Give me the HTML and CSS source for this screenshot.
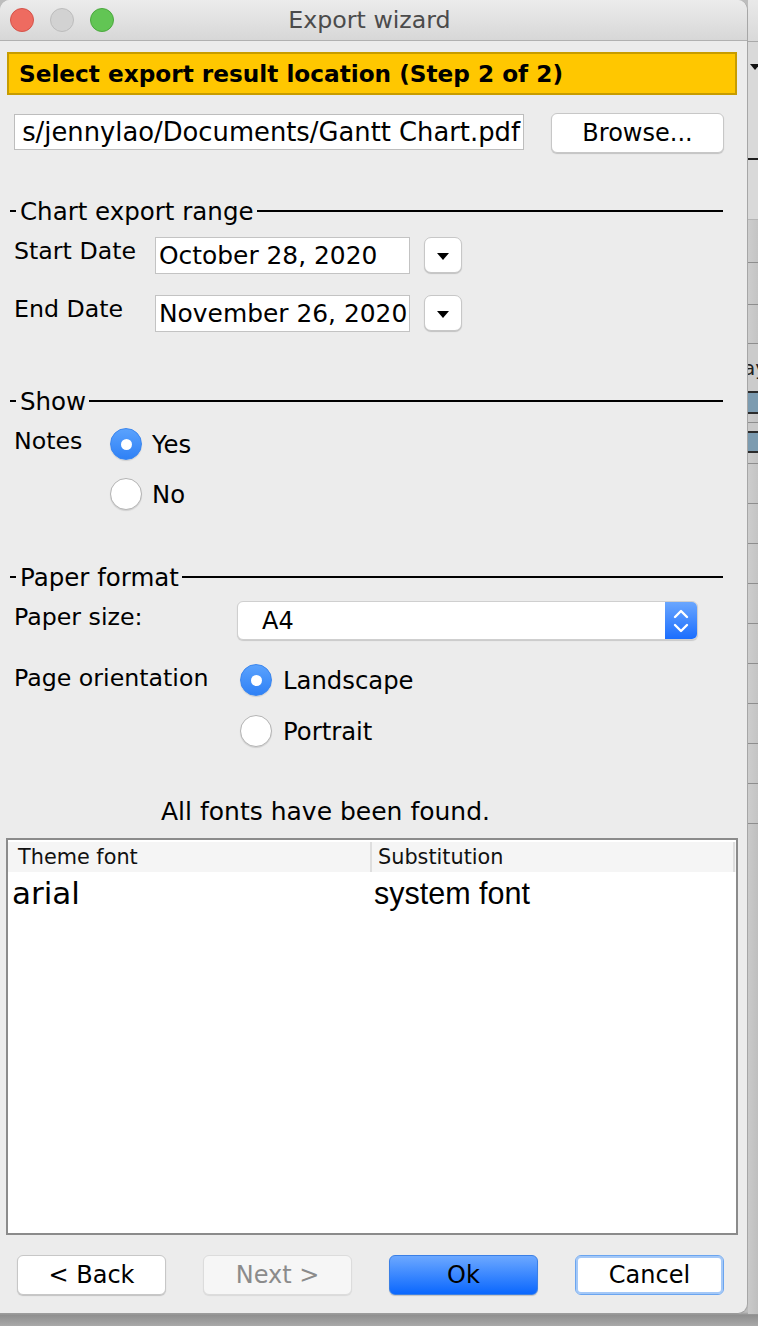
FILE: index.html
```html
<!DOCTYPE html>
<html>
<head>
<meta charset="utf-8">
<title>Export wizard</title>
<link rel="stylesheet" href="styles.css">
</head>
<body>
<div class="screen">
  <div class="dialog">
    <div class="titlebar">
      <div class="lights">
        <span class="light red"></span>
        <span class="light gray"></span>
        <span class="light green"></span>
      </div>
      <div class="title">Export wizard</div>
      <div></div>
    </div>
    <div class="content">
      <div class="banner">Select export result location (Step 2 of 2)</div>

      <div class="path-row">
        <div class="path-field"><span>s/jennylao/Documents/Gantt Chart.pdf</span></div>
        <button class="btn browse">Browse...</button>
      </div>

      <div class="group-title first"><span class="dash"></span><span class="gt">Chart export range</span><span class="rule"></span></div>
      <div class="form-row date-first">
        <span class="lbl date-lbl">Start Date</span>
        <div class="date-field">October 28, 2020</div>
        <button class="btn drop"><svg width="12" height="7" viewBox="0 0 12 7"><path d="M0 0H12L6 7Z" fill="#000"/></svg></button>
      </div>
      <div class="form-row date-second">
        <span class="lbl date-lbl">End Date</span>
        <div class="date-field">November 26, 2020</div>
        <button class="btn drop"><svg width="12" height="7" viewBox="0 0 12 7"><path d="M0 0H12L6 7Z" fill="#000"/></svg></button>
      </div>

      <div class="group-title show"><span class="dash"></span><span class="gt">Show</span><span class="rule"></span></div>
      <div class="form-row notes-row">
        <span class="lbl notes-lbl">Notes</span>
        <div class="options">
          <div class="option"><span class="radio on"></span><span class="opt-text">Yes</span></div>
          <div class="option second"><span class="radio"></span><span class="opt-text">No</span></div>
        </div>
      </div>

      <div class="group-title paper"><span class="dash"></span><span class="gt">Paper format</span><span class="rule"></span></div>
      <div class="form-row size-row">
        <span class="lbl size-lbl">Paper size:</span>
        <div class="select">
          <span class="sel-value">A4</span>
          <span class="sel-arrows"><svg width="32" height="37" viewBox="0 0 32 37"><path d="M10 15L16 9L22 15M10 23L16 29L22 23" fill="none" stroke="#fff" stroke-width="2.4" stroke-linecap="round" stroke-linejoin="round"/></svg></span>
        </div>
      </div>
      <div class="form-row orient-row">
        <span class="lbl orient-lbl">Page orientation</span>
        <div class="options">
          <div class="option"><span class="radio on"></span><span class="opt-text">Landscape</span></div>
          <div class="option second"><span class="radio"></span><span class="opt-text">Portrait</span></div>
        </div>
      </div>

      <div class="fonts-msg">All fonts have been found.</div>

      <div class="table">
        <div class="thead">
          <div class="th th1">Theme font</div>
          <div class="th th2">Substitution</div>
        </div>
        <div class="trow">
          <div class="td td1">arial</div>
          <div class="td td2">system font</div>
        </div>
      </div>

      <div class="actions">
        <button class="btn act">&lt; Back</button>
        <button class="btn act disabled">Next &gt;</button>
        <button class="btn act primary">Ok</button>
        <button class="btn act focus">Cancel</button>
      </div>
    </div>
  </div>

  <div class="backapp">
    <div class="ba-title"></div>
    <div class="ba-toolbar">
      <svg class="ba-tri" width="10" height="6" viewBox="0 0 10 6"><path d="M0 0H10L5 6Z" fill="#111"/></svg>
      <div class="ba-dark"></div>
    </div>
    <div class="ba-row h43"></div>
    <div class="ba-row h42"></div>
    <div class="ba-row h39"></div>
    <div class="ba-text"><span>ay</span></div>
    <div class="ba-blue"></div>
    <div class="ba-row h9"></div>
    <div class="ba-blue b2"></div>
    <div class="ba-row h11"></div>
    <div class="ba-row h40"></div>
    <div class="ba-row h40"></div>
    <div class="ba-row h40"></div>
    <div class="ba-row h40"></div>
    <div class="ba-row h40"></div>
    <div class="ba-row h40"></div>
    <div class="ba-row h40"></div>
    <div class="ba-row h40"></div>
    <div class="ba-row h40"></div>
    <div class="ba-rest"></div>
  </div>
</div>
</body>
</html>
```

FILE: styles.css
```css
* { box-sizing: border-box; }
html, body { margin: 0; padding: 0; }
body { width: 758px; height: 1326px; overflow: hidden; background: #a4a4a4; }

.screen {
  display: flex;
  align-items: flex-start;
  width: 758px;
  height: 1326px;
  background: linear-gradient(180deg, #bdbdbd 0, #bdbdbd 1312px, #8f8f8f 1315px, #a9a9a9 1326px);
}

.dialog {
  flex: none;
  width: 748px;
  height: 1314px;
  background: #ececec;
  border-right: 1px solid #a6a6a6;
  border-bottom: 1px solid #9c9c9c;
  border-radius: 10px 10px 10px 0;
  overflow: hidden;
  display: flex;
  flex-direction: column;
  font-family: "DejaVu Sans", "Noto Sans", sans-serif;
  color: #000;
}

/* title bar */
.titlebar {
  flex: none;
  height: 41px;
  background: linear-gradient(180deg, #ececec 0%, #d7d7d7 100%);
  border-bottom: 1px solid #b1b1b1;
  display: grid;
  grid-template-columns: 1fr auto 1fr;
  align-items: center;
}
.lights { display: flex; align-items: center; gap: 16px; padding-left: 10px; }
.light { width: 24px; height: 24px; border-radius: 50%; display: block; }
.light.red { background: #ee6b60; border: 1px solid #d4534a; }
.light.gray { background: #d2d2d2; border: 1px solid #bcbcbc; }
.light.green { background: #62c554; border: 1px solid #4ba83e; }
.title { font-size: 23.7px; color: #4b4b4b; margin-right: 8px; }

.content {
  flex: 1;
  display: flex;
  flex-direction: column;
  padding: 11px 10px 0 7px;
}

.banner {
  height: 43px;
  background: #ffc700;
  border: 2px solid #c79c00;
  font-weight: bold;
  font-size: 23.2px;
  padding-left: 10px;
  display: flex;
  align-items: center;
  white-space: nowrap;
}

.path-row { display: flex; align-items: flex-start; margin-top: 18px; padding-left: 7px; }
.path-field {
  margin-top: 1px;
  width: 510px;
  height: 36px;
  background: #fff;
  border: 1px solid #bdbdbd;
  overflow: hidden;
  display: flex;
  justify-content: flex-end;
  align-items: center;
  padding-right: 3px;
  font-size: 25.8px;
  white-space: nowrap;
}
.path-field span { flex: none; }

.btn {
  background: #fff;
  border: 1px solid #c7c7c7;
  border-radius: 6px;
  box-shadow: 0 1px 1px rgba(0,0,0,0.18);
  font-family: "DejaVu Sans", "Noto Sans", sans-serif;
  font-size: 24px;
  color: #000;
  padding: 0;
  display: flex;
  align-items: center;
  justify-content: center;
}
.browse { margin-left: 27px; width: 173px; height: 40px; }

.group-title {
  display: flex;
  align-items: center;
  height: 30px;
  padding-left: 3px;
  padding-right: 14px;
  font-size: 24.5px;
}
.group-title.first { margin-top: 43px; }
.group-title.show { margin-top: 54px; }
.group-title.paper { margin-top: 52px; }
.dash { width: 6px; height: 2px; background: #000; margin-right: 4px; flex: none; }
.gt { white-space: nowrap; }
.rule { flex: 1; height: 2px; background: #000; margin-left: 3px; }

.form-row { display: flex; align-items: flex-start; padding-left: 7px; }
.lbl { font-size: 23.7px; line-height: 28px; white-space: nowrap; flex: none; }
.date-first { margin-top: 11px; }
.date-second { margin-top: 21px; }
.date-lbl { width: 141px; }
.date-field {
  width: 255px;
  height: 37px;
  background: #fff;
  border: 1px solid #c3c3c3;
  padding-left: 3px;
  display: flex;
  align-items: center;
  font-size: 24.9px;
  white-space: nowrap;
  overflow: hidden;
}
.drop { margin-left: 14px; width: 38px; height: 36px; border-radius: 7px; }
.drop svg { display: block; margin-top: 2px; }

.notes-row { margin-top: 11px; }
.notes-lbl { width: 96px; }
.options { display: flex; flex-direction: column; margin-top: 1px; }
.option { display: flex; align-items: center; height: 32px; }
.option.second { margin-top: 18px; }
.opt-text { font-size: 24.3px; margin-left: 10px; white-space: nowrap; }
.orient-row .opt-text { margin-left: 11px; }

.radio {
  width: 32px;
  height: 32px;
  border-radius: 50%;
  background: #fff;
  border: 1px solid #b4b4b4;
  box-shadow: 0 1px 1px rgba(0,0,0,0.12);
  display: flex;
  align-items: center;
  justify-content: center;
  flex: none;
}
.radio.on {
  background: linear-gradient(180deg, #5aa2fd 0%, #2f81f6 100%);
  border: 1px solid #3b86ee;
}
.radio.on::after {
  content: "";
  width: 11px;
  height: 11px;
  border-radius: 50%;
  background: #fff;
  display: block;
}

.size-row { margin-top: 9px; }
.size-lbl { width: 223px; margin-top: 2px; }
.select {
  width: 461px;
  height: 39px;
  background: #fff;
  border: 1px solid #cfcfcf;
  border-radius: 6px;
  box-shadow: 0 1px 1px rgba(0,0,0,0.15);
  display: flex;
  align-items: stretch;
  overflow: hidden;
}
.sel-value { flex: 1; font-size: 24px; padding-left: 24px; display: flex; align-items: center; }
.sel-arrows {
  width: 32px;
  background: linear-gradient(180deg, #6aa6fe 0%, #1b6efe 100%);
  display: flex;
  align-items: center;
  justify-content: center;
}
.sel-arrows svg { display: block; }

.orient-row { margin-top: 24px; }
.orient-lbl { width: 226px; }
.orient-row .options { margin-top: 0; }
.orient-row .option.second { margin-top: 19px; }

.fonts-msg {
  margin-top: 50px;
  line-height: 30px;
  font-size: 25px;
  text-align: center;
  padding-right: 93px;
}

.table {
  margin-top: 11px;
  margin-left: -1px;
  margin-right: -1px;
  height: 397px;
  background: #fff;
  border: 2px solid #8b8b8b;
  padding-top: 2px;
}
.thead {
  display: grid;
  grid-template-columns: 364px 363px 1fr;
  height: 30px;
  background: #f5f5f5;
}
.th {
  font-size: 20.8px;
  color: #111;
  display: flex;
  align-items: center;
  white-space: nowrap;
}
.th1 { padding-left: 10px; border-right: 2px solid #dedede; }
.th2 { padding-left: 6px; border-right: 2px solid #dedede; }
.trow {
  display: grid;
  grid-template-columns: 364px 1fr;
  height: 42px;
  align-items: center;
}
.td1 { font-size: 31px; padding-left: 4px; }
.td2 { font-family: "Liberation Sans", Arial, sans-serif; font-size: 30.5px; padding-left: 2px; }

.actions { display: flex; gap: 37px; margin-top: 20px; padding-left: 10px; }
.act { width: 149px; height: 40px; }
.act.disabled { background: #f6f6f6; border-color: #dcdcdc; color: #8b8b8b; box-shadow: 0 1px 1px rgba(0,0,0,0.08); }
.act.primary {
  background: linear-gradient(180deg, #6ca8ff 0%, #0a67fe 100%);
  border: 1px solid #3a7fe6;
  color: #000;
}
.act.focus {
  border: 1px solid #6aa5f0;
  box-shadow: inset 0 0 0 2px #a4c8f7;
}

/* background application strip */
.backapp {
  flex: none;
  width: 10px;
  height: 1314px;
  display: flex;
  flex-direction: column;
  overflow: hidden;
  background: #c9c9c9;
}
.ba-title { height: 42px; background: linear-gradient(180deg, #e9e9e9, #d9d9d9); border-bottom: 1px solid #a9a9a9; flex: none; }
.ba-toolbar { height: 178px; background: #d9d9d9; border-bottom: 1px solid #b4b4b4; flex: none; padding-top: 22px; }
.ba-tri { display: block; margin-left: 2px; }
.ba-dark { height: 2px; background: #1e1e1e; margin-top: 88px; }
.ba-row { flex: none; border-bottom: 1px solid #8e8e8e; background: linear-gradient(90deg, #cdcdcd, #c4c4c4); }
.h43 { height: 43px; }
.h42 { height: 42px; }
.h39 { height: 39px; }
.h9 { height: 9px; }
.h11 { height: 11px; }
.h40 { height: 40px; }
.ba-text {
  flex: none;
  height: 47px;
  display: flex;
  align-items: center;
  overflow: hidden;
  background: #cbcbcb;
  font-family: "DejaVu Sans", sans-serif;
  font-size: 20px;
  color: #222;
}
.ba-text span { margin-left: -5px; white-space: nowrap; }
.ba-blue { flex: none; height: 23px; background: #7c9bb0; border-top: 2px solid #2b2b2b; border-bottom: 2px solid #2b2b2b; }
.ba-blue.b2 { height: 22px; margin-top: 8px; }
.ba-rest { flex: 1; background: linear-gradient(90deg, #cacaca, #bfbfbf); }
```
